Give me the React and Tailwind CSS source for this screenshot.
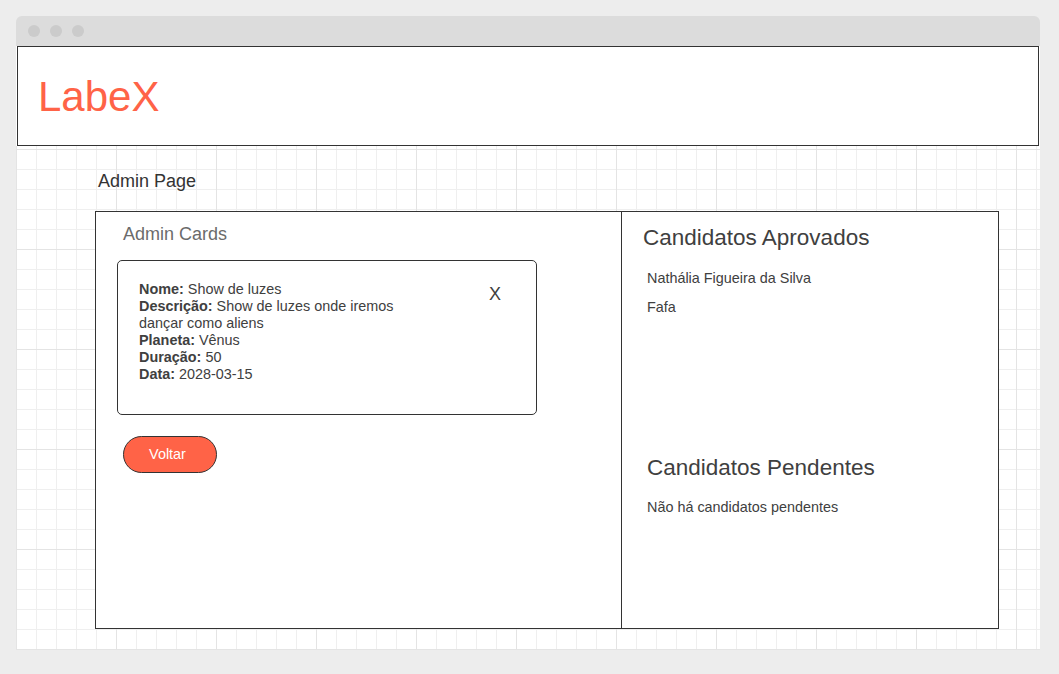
import React from 'react'

const candidatosAprovados = ['Nathália Figueira da Silva', 'Fafa']

const trip = {
  nome: 'Show de luzes',
  descricao: 'Show de luzes onde iremos dançar como aliens',
  planeta: 'Vênus',
  duracao: 50,
  data: '2028-03-15',
}

const TripCard = ({ trip }) => {
  return (
    <div className="ml-[21px] mt-[15px] w-[420px] h-[155px] rounded-[5px] border border-[#333] bg-white flex justify-between pl-[21px] pt-[20px] pr-[35px]">
      <div className="w-[270px] text-[14.4px] leading-[17px] text-[#404040]">
        <div><b>Nome:</b> {trip.nome}</div>
        <div><b>Descrição:</b> {trip.descricao}</div>
        <div><b>Planeta:</b> {trip.planeta}</div>
        <div><b>Duração:</b> {trip.duracao}</div>
        <div><b>Data:</b> {trip.data}</div>
      </div>
      <button className="h-[26px] text-[18px] leading-[26px] text-[#404040]">X</button>
    </div>
  )
}

const App = () => {
  return (
    <div className="min-h-screen bg-[#ededed] pt-4 px-4 font-['Liberation_Sans',Arial,sans-serif]">
      <div className="w-[1024px] rounded-t-[6px] overflow-hidden">
        {/* Browser bar */}
        <div className="h-[30px] bg-[#dcdcdc] flex items-center gap-[10px] pl-[12px]">
          <span className="w-[12px] h-[12px] rounded-full bg-[#cbcbcb]"></span>
          <span className="w-[12px] h-[12px] rounded-full bg-[#cbcbcb]"></span>
          <span className="w-[12px] h-[12px] rounded-full bg-[#cbcbcb]"></span>
        </div>

        <div className="bg-white">
          {/* Header */}
          <header className="mx-px h-[100px] border border-[#333] bg-white flex items-center pl-[20px]">
            <span className="text-[42px] leading-none text-[#ff6347] pt-[2px]">LabeX</span>
          </header>

          {/* Grid area */}
          <div className="h-[504px] bg-white bg-[image:linear-gradient(to_right,#e4e4e4_1px,transparent_1px),linear-gradient(to_bottom,#e4e4e4_1px,transparent_1px),linear-gradient(to_right,#efefef_1px,transparent_1px),linear-gradient(to_bottom,#efefef_1px,transparent_1px)] bg-[size:100px_100px,100px_100px,20px_20px,20px_20px] bg-[position:0_3px] pl-[79px] pt-[25px]">
            <h2 className="pl-[3px] text-[18px] leading-[21px] text-[#333]">Admin Page</h2>

            <div className="mt-[19px] w-[904px] h-[418px] border border-[#333] bg-white flex">
              {/* Left column */}
              <div className="w-[526px] border-r border-[#333]">
                <h3 className="pl-[27px] pt-[12px] text-[18px] leading-[21px] text-[#6b6b6b]">Admin Cards</h3>
                <TripCard trip={trip} />
                <button className="ml-[27px] mt-[21px] w-[94px] h-[37px] rounded-full border border-[#333] bg-[#ff6347] text-white text-[14.4px] pr-[5px]">
                  Voltar
                </button>
              </div>

              {/* Right column */}
              <div className="flex-1">
                <h3 className="pl-[21px] pt-[13px] text-[22.5px] leading-[26px] text-[#404040]">Candidatos Aprovados</h3>
                <ul className="pl-[25px] pt-[19px] text-[14.4px] leading-[17px] text-[#404040]">
                  {candidatosAprovados.map((nome) => (
                    <li key={nome} className="mb-[12px]">{nome}</li>
                  ))}
                </ul>
                <h3 className="pl-[25px] mt-[139px] text-[22.5px] leading-[26px] text-[#404040]">Candidatos Pendentes</h3>
                <p className="pl-[25px] pt-[18px] text-[14.4px] leading-[17px] text-[#404040]">Não há candidatos pendentes</p>
              </div>
            </div>
          </div>
        </div>
      </div>
    </div>
  )
}

export default App
